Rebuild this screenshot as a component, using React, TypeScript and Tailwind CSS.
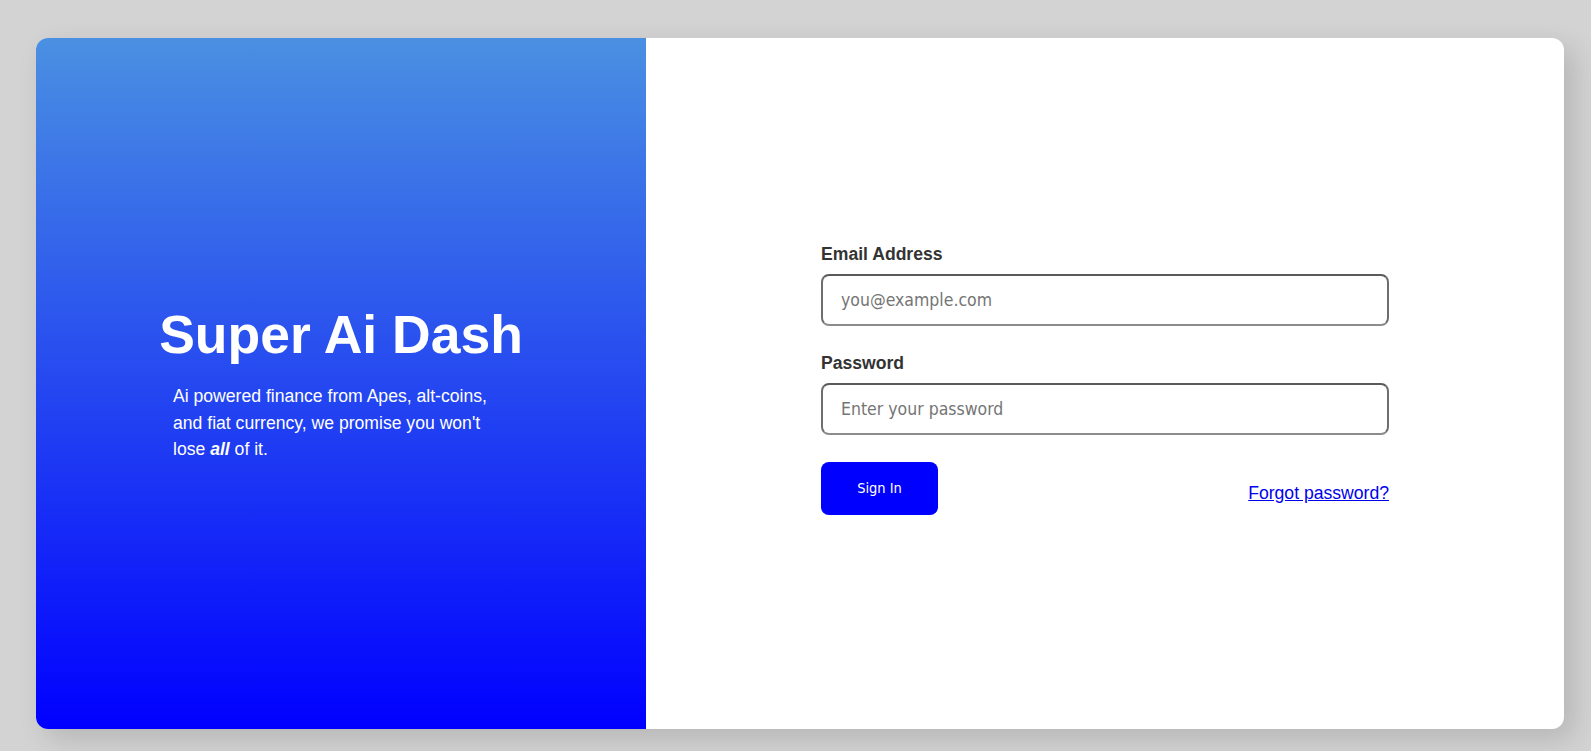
export default function App() {
  return (
    <div className="flex min-h-screen w-full bg-[#d3d3d3] pl-[36px] pt-[38px] font-['Liberation_Sans',Arial,sans-serif]">
      <div className="flex h-[691px] w-[1528px] overflow-hidden rounded-xl bg-white shadow-[10px_10px_28px_rgba(0,0,0,0.14)]">
        <div className="flex w-[610px] flex-col items-center justify-center bg-[linear-gradient(to_bottom,#4a90e2,#0000ff)] text-white">
          <h1 className="mb-[18px] text-[53.5px] font-bold leading-[61px]">Super Ai Dash</h1>
          <p className="w-[336px] text-[17.6px] leading-[26.4px]">
            Ai powered finance from Apes, alt-coins, and fiat currency, we
            promise you won't lose <strong className="italic">all</strong> of it.
          </p>
        </div>

        <div className="flex flex-1 items-center justify-center pb-[8px]">
          <form className="flex w-[568px] flex-col" onSubmit={(e) => e.preventDefault()}>
            <label className="mb-[10px] text-[17.6px] font-bold leading-[20px] text-[#333]">
              Email Address
            </label>
            <input
              type="email"
              placeholder="you@example.com"
              className="mb-[27px] h-[52px] rounded-lg border-2 border-x-[#6e6e6e] border-t-[#5a5a5a] border-b-[#8c8c8c] px-[18px] font-['DejaVu_Sans_Condensed',Tahoma,sans-serif] text-[17.5px] outline-none placeholder:text-[#757575]"
            />
            <label className="mb-[10px] text-[17.6px] font-bold leading-[20px] text-[#333]">
              Password
            </label>
            <input
              type="password"
              placeholder="Enter your password"
              className="mb-[27px] h-[52px] rounded-lg border-2 border-x-[#6e6e6e] border-t-[#5a5a5a] border-b-[#8c8c8c] px-[18px] font-['DejaVu_Sans_Condensed',Tahoma,sans-serif] text-[17.5px] outline-none placeholder:text-[#757575]"
            />
            <div className="flex items-center justify-between">
              <button
                type="submit"
                className="h-[53px] w-[117px] rounded-lg bg-[#0000ff] font-['DejaVu_Sans_Condensed',Tahoma,sans-serif] text-[14.5px] text-white"
              >
                Sign In
              </button>
              <a href="#" className="pt-[9px] text-[17.6px] text-[#0000ee] underline">
                Forgot password?
              </a>
            </div>
          </form>
        </div>
      </div>
    </div>
  );
}
